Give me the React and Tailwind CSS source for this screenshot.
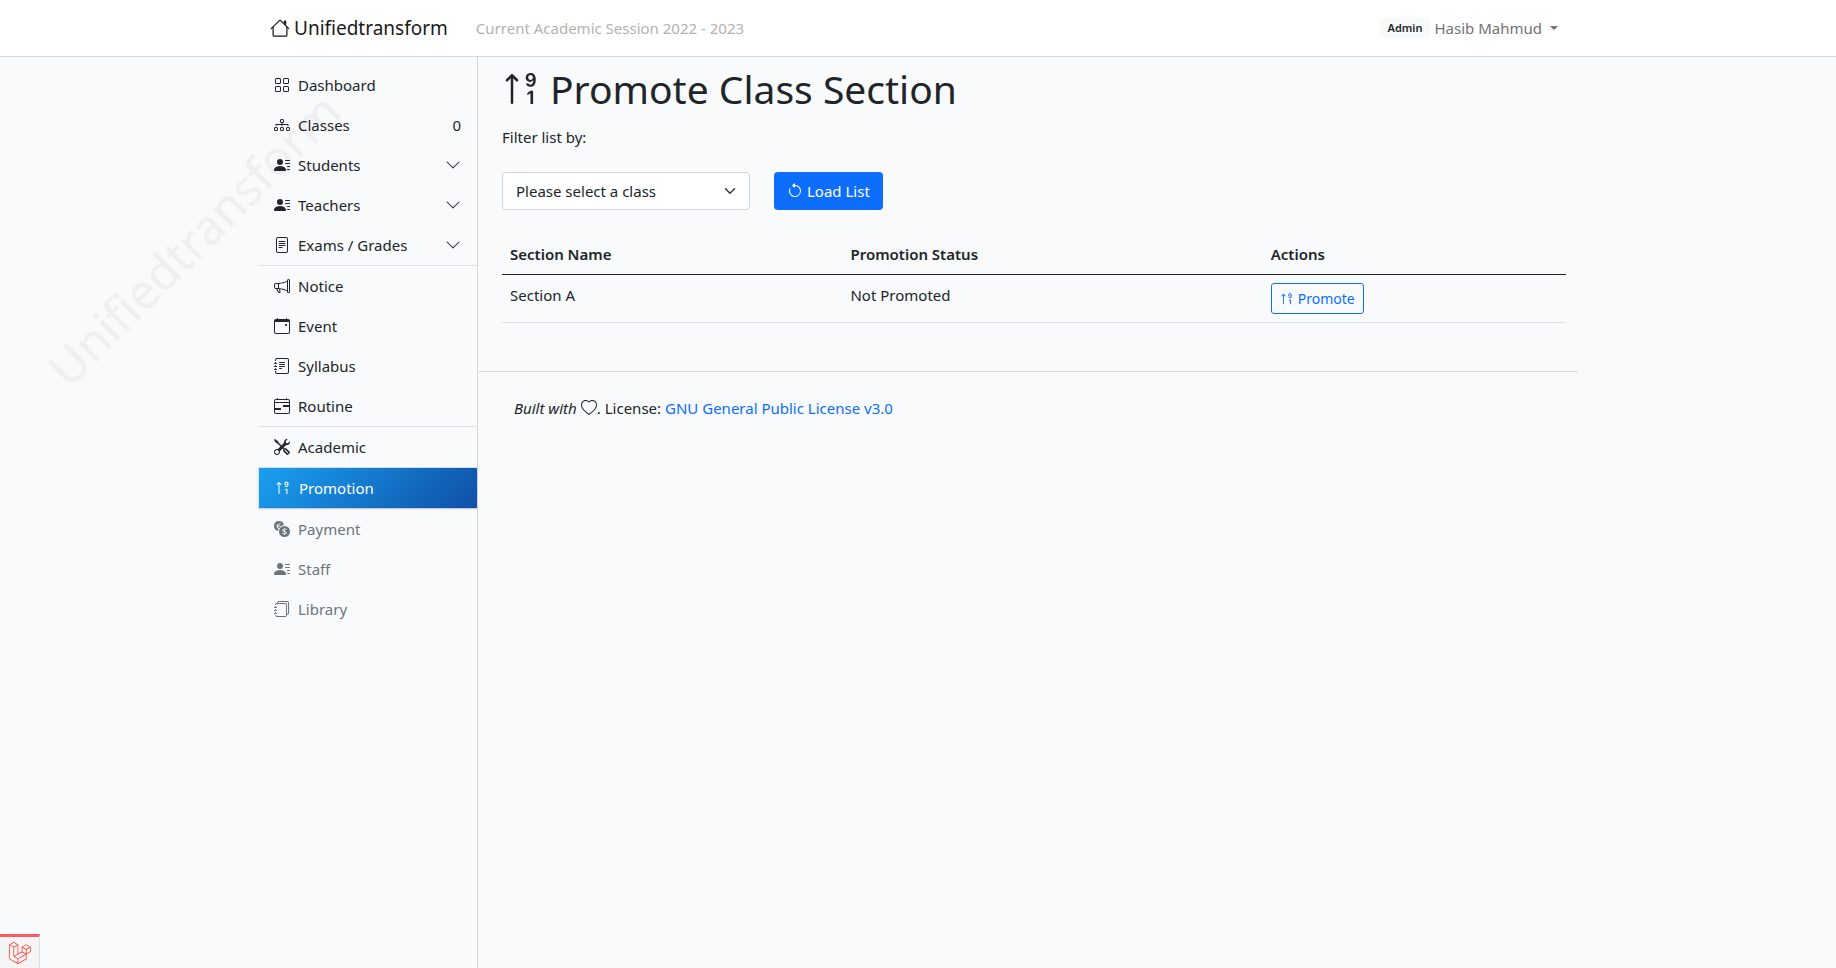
import React from "react";
import {
  BsArrowCounterclockwise,
  BsCalendarEvent,
  BsCalendar4Range,
  BsChevronDown,
  BsCurrencyExchange,
  BsDiagram3,
  BsFileText,
  BsGrid,
  BsHeart,
  BsJournals,
  BsJournalText,
  BsMegaphone,
  BsPersonLinesFill,
  BsSortNumericUpAlt,
  BsTools,
} from "react-icons/bs";
import { SiLaravel } from "react-icons/si";

function HouseIcon() {
  return (
    <svg viewBox="0 0 16 16" fill="currentColor" className="size-5 shrink-0" aria-hidden="true">
      <path fillRule="evenodd" d="M2 13.5V7h1v6.5a.5.5 0 0 0 .5.5h9a.5.5 0 0 0 .5-.5V7h1v6.5a1.5 1.5 0 0 1-1.5 1.5h-9A1.5 1.5 0 0 1 2 13.5zm11-11V6l-2-2V2.5a.5.5 0 0 1 .5-.5h1a.5.5 0 0 1 .5.5z" />
      <path fillRule="evenodd" d="M7.293 1.5a1 1 0 0 1 1.414 0l6.647 6.646a.5.5 0 0 1-.708.708L8 2.207 1.354 8.854a.5.5 0 1 1-.708-.708L7.293 1.5z" />
    </svg>
  );
}

const groups = [
  [
    { label: "Dashboard", icon: BsGrid },
    { label: "Classes", icon: BsDiagram3, count: 0 },
    { label: "Students", icon: BsPersonLinesFill, expandable: true },
    { label: "Teachers", icon: BsPersonLinesFill, expandable: true },
    { label: "Exams / Grades", icon: BsFileText, expandable: true },
  ],
  [
    { label: "Notice", icon: BsMegaphone },
    { label: "Event", icon: BsCalendarEvent },
    { label: "Syllabus", icon: BsJournalText },
    { label: "Routine", icon: BsCalendar4Range },
  ],
  [{ label: "Academic", icon: BsTools }],
  [{ label: "Promotion", icon: BsSortNumericUpAlt, active: true }],
  [
    { label: "Payment", icon: BsCurrencyExchange, disabled: true },
    { label: "Staff", icon: BsPersonLinesFill, disabled: true },
    { label: "Library", icon: BsJournals, disabled: true },
  ],
];

function itemTone(item) {
  if (item.active) {
    return "border-l border-[#dee2e6] bg-linear-[135deg] from-[#1aa0f0] to-[#0f4fa8] text-white shadow-sm";
  }
  return item.disabled ? "text-[#6c757d]" : "text-[#212529]";
}

function NavItem({ item }) {
  const Icon = item.icon;
  return (
    <li>
      <a
        href="#"
        aria-current={item.active ? "page" : undefined}
        aria-disabled={item.disabled ? "true" : undefined}
        className={"flex h-10 items-center gap-2 px-4 " + itemTone(item)}
      >
        <Icon className="size-4 shrink-0" />
        <span>{item.label}</span>
        {item.count !== undefined && <span className="ml-auto">{item.count}</span>}
        {item.expandable && <BsChevronDown className="ml-auto size-4" />}
      </a>
    </li>
  );
}

function Sidebar() {
  return (
    <nav aria-label="Main" className="w-1/6 border-r border-[#d6d8db] pt-2">
      {groups.map((items, index) => (
        <ul
          key={items[0].label}
          className={index < groups.length - 1 ? "border-b border-[#dee2e6]" : ""}
        >
          {items.map((item) => (
            <NavItem key={item.label} item={item} />
          ))}
        </ul>
      ))}
    </nav>
  );
}

function Header() {
  return (
    <header className="border-b border-[#d6d8db] bg-white">
      <div className="mx-auto flex h-14 max-w-[1320px] items-center px-3">
        <a href="#" className="flex items-center gap-1 text-[19px] text-[#1a1a1a]">
          <HouseIcon />
          <span>Unifiedtransform</span>
        </a>
        <span className="ml-7 text-[#b2b2b2]">Current Academic Session 2022 - 2023</span>
        <button type="button" className="ml-auto mr-2 flex items-center gap-1 text-[#737373]">
          <span className="rounded bg-[#f8f9fa] px-2 text-[11px] leading-5 font-semibold text-[#212529]">
            Admin
          </span>
          <span>Hasib Mahmud</span>
          <svg viewBox="0 0 10 5" fill="currentColor" className="ml-1 h-1 w-2" aria-hidden="true">
            <path d="M0 0h10L5 5z" />
          </svg>
        </button>
      </div>
    </header>
  );
}

function SectionTable() {
  return (
    <table className="mt-6 w-full table-fixed text-left">
      <colgroup>
        <col className="w-[32%]" />
        <col className="w-[39.5%]" />
        <col />
      </colgroup>
      <thead>
        <tr className="border-b border-[#212529]">
          <th scope="col" className="p-2 font-semibold">Section Name</th>
          <th scope="col" className="p-2 font-semibold">Promotion Status</th>
          <th scope="col" className="p-2 font-semibold">Actions</th>
        </tr>
      </thead>
      <tbody>
        <tr className="border-b border-[#dee2e6] align-top">
          <td className="p-2">Section A</td>
          <td className="p-2">Not Promoted</td>
          <td className="p-2">
            <a
              href="#"
              className="inline-flex h-[31px] items-center gap-1 rounded-[3px] border border-[#0d6efd] px-2 align-top text-sm text-[#0d6efd]"
            >
              <BsSortNumericUpAlt className="size-[14px]" />
              Promote
            </a>
          </td>
        </tr>
      </tbody>
    </table>
  );
}

export default function App() {
  return (
    <div className="relative isolate flex min-h-screen flex-col overflow-hidden bg-[#f8fafc] font-['Noto_Sans','Open_Sans',sans-serif] text-[15px] leading-6 text-[#212529]">
      <div
        aria-hidden="true"
        className="absolute top-[211px] left-0 -z-10 w-[384px] -rotate-45 text-center text-5xl leading-[60px] text-[#efefef]"
      >
        Unifiedtransform
      </div>
      <Header />
      <div className="mx-auto flex w-full max-w-[1320px] grow">
        <Sidebar />
        <div className="flex-1">
          <main className="pt-2 pr-3 pl-6">
            <h1 className="flex items-center gap-2 text-[39px] leading-[48px]">
              <BsSortNumericUpAlt className="size-10" />
              Promote Class Section
            </h1>
            <p className="mt-3">Filter list by:</p>
            <form className="mt-[23px] flex gap-6" onSubmit={(event) => event.preventDefault()}>
              <div className="relative w-[248px]">
                <select
                  aria-label="Class"
                  className="h-[38px] w-full appearance-none rounded border border-[#ced4da] bg-white pr-9 pl-[13px]"
                >
                  <option>Please select a class</option>
                </select>
                <svg viewBox="0 0 16 16" fill="none" stroke="#343a40" strokeWidth="2" strokeLinecap="round" strokeLinejoin="round" className="pointer-events-none absolute top-[13px] right-3 h-3 w-4" aria-hidden="true">
                  <path d="m2 5 6 6 6-6" />
                </svg>
              </div>
              <button
                type="submit"
                className="flex h-[38px] items-center gap-1 rounded bg-[#0d6efd] px-[13px] text-white"
              >
                <BsArrowCounterclockwise className="size-4" />
                Load List
              </button>
            </form>
            <SectionTable />
          </main>
          <footer className="mt-12 border-t border-[#d6d8db] px-9 py-6">
            <p className="flex items-center gap-1">
              <em>Built with</em>
              <span className="flex items-center">
                <BsHeart className="size-4" />.
              </span>
              <span>License:</span>
              <a href="#" className="text-[#0d6efd]">
                GNU General Public License v3.0
              </a>
            </p>
          </footer>
        </div>
      </div>
      <button
        type="button"
        aria-label="Open debug bar"
        className="absolute bottom-0 left-0 flex h-[34px] w-10 items-center justify-center border-t-[3px] border-r border-t-[#ff5a5f] border-r-[#dddddd] bg-[#f5f5f5] text-[#ff2d20]"
      >
        <SiLaravel className="size-[22px]" />
      </button>
    </div>
  );
}
